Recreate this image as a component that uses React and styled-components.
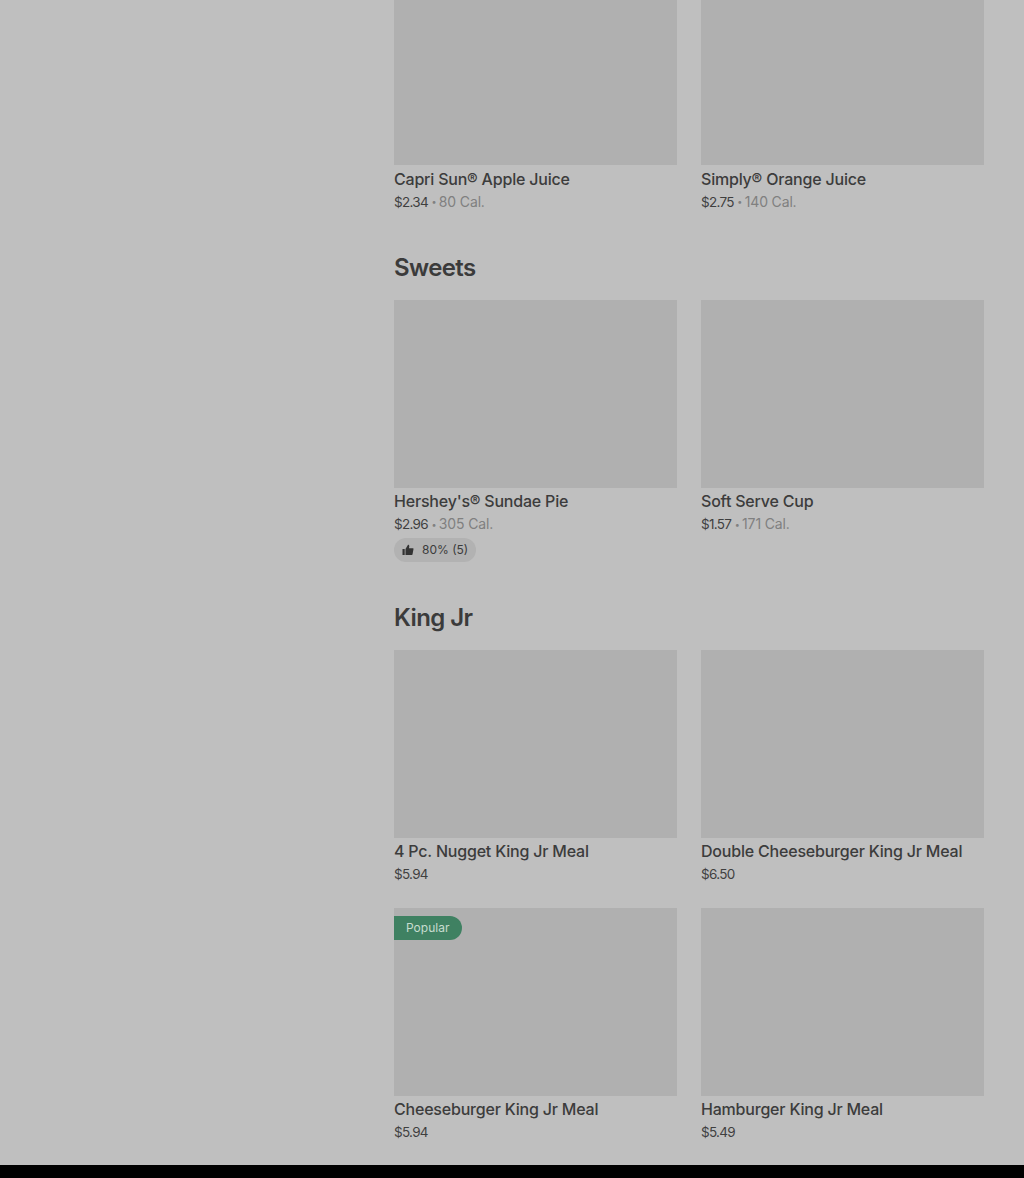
import React from "react";
import styled, { createGlobalStyle } from "styled-components";

const Global = createGlobalStyle`
  html, body { margin: 0; padding: 0; background: #bfbfbf; }
  body { font-family: Inter, "Liberation Sans", sans-serif; }
`;
const Page = styled.div`
  height: 1178px;
  display: flex;
  flex-direction: column;
  overflow: hidden;
`;
const Main = styled.main`
  height: 1165px;
  padding: 0 40px 0 394px;
  box-sizing: border-box;
  background: #bfbfbf;
`;
const Footer = styled.footer`
  height: 13px;
  background: #000;
`;
const Section = styled.section`
  padding-bottom: ${(p) => p.$after}px;
`;
const Heading = styled.h2`
  margin: 0 0 16px;
  height: 32px;
  line-height: 32px;
  font-size: 24px;
  font-weight: 600;
  letter-spacing: -0.6px;
  color: #3b3b3b;
`;
const Grid = styled.div`
  display: grid;
  grid-template-columns: 283px 283px;
  column-gap: 24px;
  row-gap: 24px;
`;
const Card = styled.article`
  min-width: 0;
`;
const Picture = styled.div`
  position: relative;
  height: ${(p) => p.$h}px;
  background: #b0b0b0;
`;
const Tag = styled.span`
  position: absolute;
  top: 8px;
  left: 0;
  height: 24px;
  line-height: 24px;
  padding: 0 13px 0 12px;
  border-radius: 0 12px 12px 0;
  background: #3f8162;
  color: #c7dccf;
  font-size: 12px;
`;
const Name = styled.div`
  margin-top: 2.5px;
  height: 22px;
  line-height: 22px;
  font-size: 16px;
  font-weight: 500;
  letter-spacing: -0.2px;
  color: #3c3c3c;
  white-space: nowrap;
`;
const Meta = styled.div`
  margin-top: 2px;
  height: 20px;
  line-height: 20px;
  font-size: 13.5px;
  letter-spacing: -0.7px;
  color: #3f3f3f;
  white-space: nowrap;
`;
const Muted = styled.span`
  color: #808080;
  font-size: 14px;
  letter-spacing: -0.15px;
`;
const Dot = styled.span`
  margin: 0 3px 0 3.5px;
  font-size: 9px;
  vertical-align: 1.5px;
  color: #808080;
`;
const Rating = styled.div`
  margin-top: 4px;
  display: inline-flex;
  align-items: center;
  gap: 8px;
  box-sizing: border-box;
  height: 24px;
  padding: 0 8px 1px;
  border-radius: 12px;
  background: #b2b2b2;
  font-size: 12px;
  color: #3c3c3c;
`;
const Thumb = () => (
  <svg width="12" height="12" viewBox="0 0 12 12" fill="#333" aria-hidden="true">
    <path d="M0.5 5h2.2v6H0.5z" />
    <path d="M3.5 5 6 .8c.9 0 1.4.6 1.3 1.5L7 4.2h4c.4 0 .6.3.5.7l-1 5.6c-.1.3-.3.5-.6.5H3.5z" />
  </svg>
);

const Item = ({ name, price, cal, h = 187.5, rating, tag }) => (
  <Card>
    <Picture $h={h}>{tag && <Tag>{tag}</Tag>}</Picture>
    <Name>{name}</Name>
    <Meta>
      {price}
      {cal && (
        <>
          <Dot>•</Dot>
          <Muted>{cal}</Muted>
        </>
      )}
    </Meta>
    {rating && (
      <Rating>
        <Thumb />
        {rating}
      </Rating>
    )}
  </Card>
);

export default function App() {
  return (
    <Page>
      <Global />
      <Main>
        <Section $after={40.5}>
          <Grid>
            <Item h={165} name="Capri Sun® Apple Juice" price="$2.34" cal="80 Cal." />
            <Item h={165} name="Simply® Orange Juice" price="$2.75" cal="140 Cal." />
          </Grid>
        </Section>
        <Section $after={40}>
          <Heading>Sweets</Heading>
          <Grid>
            <Item name="Hershey's® Sundae Pie" price="$2.96" cal="305 Cal." rating="80% (5)" />
            <Item name="Soft Serve Cup" price="$1.57" cal="171 Cal." />
          </Grid>
        </Section>
        <Section $after={0}>
          <Heading>King Jr</Heading>
          <Grid>
            <Item name="4 Pc. Nugget King Jr Meal" price="$5.94" />
            <Item name="Double Cheeseburger King Jr Meal" price="$6.50" />
            <Item name="Cheeseburger King Jr Meal" price="$5.94" tag="Popular" />
            <Item name="Hamburger King Jr Meal" price="$5.49" />
          </Grid>
        </Section>
      </Main>
      <Footer />
    </Page>
  );
}
